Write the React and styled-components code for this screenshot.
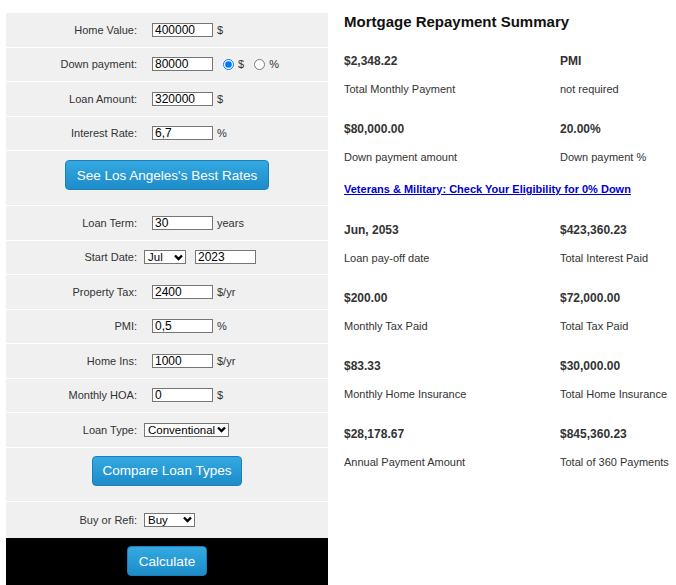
import React from "react";
import styled, { createGlobalStyle } from "styled-components";

const GlobalStyle = createGlobalStyle`
  body {
    margin: 0;
    background: #fff;
    font-family: Arial, "Liberation Sans", Helvetica, sans-serif;
  }
`;

const Chevron = () => (
  <ChevronSvg width="9" height="7" viewBox="0 0 9 7">
    <path d="M1 1.5 L4.5 5 L8 1.5" fill="none" stroke="#000" strokeWidth="2.4" />
  </ChevronSvg>
);

const fields = [
  { label: "Home Value:", value: "400000", unit: "$" },
  { label: "Down payment:", value: "80000", radio: true },
  { label: "Loan Amount:", value: "320000", unit: "$" },
  { label: "Interest Rate:", value: "6,7", unit: "%" },
];

const fields2 = [
  { label: "Property Tax:", value: "2400", unit: "$/yr" },
  { label: "PMI:", value: "0,5", unit: "%" },
  { label: "Home Ins:", value: "1000", unit: "$/yr" },
  { label: "Monthly HOA:", value: "0", unit: "$" },
];

const summary = [
  ["$2,348.22", "Total Monthly Payment", "PMI", "not required"],
  ["$80,000.00", "Down payment amount", "20.00%", "Down payment %"],
];

const summary2 = [
  ["Jun, 2053", "Loan pay-off date", "$423,360.23", "Total Interest Paid"],
  ["$200.00", "Monthly Tax Paid", "$72,000.00", "Total Tax Paid"],
  ["$83.33", "Monthly Home Insurance", "$30,000.00", "Total Home Insurance"],
  ["$28,178.67", "Annual Payment Amount", "$845,360.23", "Total of 360 Payments"],
];

function FieldRow({ f }) {
  return (
    <Row>
      <Label>{f.label}</Label>
      <Cell>
        <Input defaultValue={f.value} />
        {f.radio ? (
          <>
            <Radio type="radio" name="dp" defaultChecked />
            <Unit>$</Unit>
            <Radio type="radio" name="dp" />
            <Unit>%</Unit>
          </>
        ) : (
          <Unit>{f.unit}</Unit>
        )}
      </Cell>
    </Row>
  );
}

function Select({ value, width }) {
  return (
    <SelectBox $w={width}>
      <span>{value}</span>
      <Chevron />
    </SelectBox>
  );
}

function SummaryGrid({ rows }) {
  return (
    <Grid>
      {rows.map((r) => (
        <React.Fragment key={r[1]}>
          <Item>
            <Value>{r[0]}</Value>
            <Caption>{r[1]}</Caption>
          </Item>
          <Item>
            <Value>{r[2]}</Value>
            <Caption>{r[3]}</Caption>
          </Item>
        </React.Fragment>
      ))}
    </Grid>
  );
}

export default function App() {
  return (
    <Page>
      <GlobalStyle />
      <Form>
        {fields.map((f) => (
          <FieldRow key={f.label} f={f} />
        ))}
        <ButtonRow $h={55} $top={9}>
          <BlueButton $px={11}>See Los Angeles's Best Rates</BlueButton>
        </ButtonRow>
        <FieldRow f={{ label: "Loan Term:", value: "30", unit: "years" }} />
        <Row>
          <Label>Start Date:</Label>
          <Cell $flush>
            <Select value="Jul" width={42} />
            <Input defaultValue="2023" />
          </Cell>
        </Row>
        {fields2.map((f) => (
          <FieldRow key={f.label} f={f} />
        ))}
        <Row>
          <Label>Loan Type:</Label>
          <Cell $flush>
            <Select value="Conventional" width={85} />
          </Cell>
        </Row>
        <ButtonRow $h={54} $top={8}>
          <BlueButton $px={10}>Compare Loan Types</BlueButton>
        </ButtonRow>
        <Row $h={36.5} $last>
          <Label>Buy or Refi:</Label>
          <Cell $flush>
            <Select value="Buy" width={51} />
          </Cell>
        </Row>
        <CalcBar>
          <BlueButton $px={11}>Calculate</BlueButton>
        </CalcBar>
      </Form>
      <Summary>
        <Heading>Mortgage Repayment Summary</Heading>
        <SummaryGrid rows={summary} />
        <Link href="#">Veterans &amp; Military: Check Your Eligibility for 0% Down</Link>
        <SummaryGrid rows={summary2} />
      </Summary>
    </Page>
  );
}

const Page = styled.div`
  display: flex;
  align-items: flex-start;
  padding: 13px 0 0 6px;
`;

const Form = styled.div`
  width: 322px;
  flex-shrink: 0;
  background: #f0f0f0;
`;

const Row = styled.div`
  display: grid;
  grid-template-columns: 138px 1fr;
  align-items: center;
  box-sizing: border-box;
  height: ${({ $h }) => $h || 34.5}px;
  border-bottom: ${({ $last }) => ($last ? "none" : "1px solid #fff")};
`;

const Label = styled.div`
  text-align: right;
  padding-right: 7px;
  font-size: 11px;
  color: #333;
`;

const Cell = styled.div`
  display: flex;
  align-items: center;
  gap: 4px;
  padding-left: ${({ $flush }) => ($flush ? "0" : "8px")};
  & > div + input {
    margin-left: 5px;
  }
`;

const Input = styled.input`
  box-sizing: border-box;
  width: 61px;
  height: 14px;
  padding: 0 2px;
  border: 1px solid #767676;
  border-radius: 0;
  background: #fff;
  font: 12px Arial, "Liberation Sans", sans-serif;
  color: #000;
  outline: none;
`;

const Radio = styled.input`
  width: 11px;
  height: 11px;
  margin: 0 0 0 6px;
  accent-color: #0075ff;
`;

const Unit = styled.span`
  font-size: 11px;
  color: #333;
`;

const SelectBox = styled.div`
  box-sizing: border-box;
  width: ${({ $w }) => $w}px;
  height: 14px;
  display: flex;
  align-items: center;
  justify-content: space-between;
  gap: 2px;
  padding: 0 2px 0 3px;
  border: 1px solid #767676;
  background: #fff;
  font-size: 11.5px;
  color: #000;
  white-space: nowrap;
  overflow: hidden;
`;

const ChevronSvg = styled.svg`
  flex-shrink: 0;
`;

const ButtonRow = styled.div`
  display: flex;
  align-items: flex-start;
  justify-content: center;
  box-sizing: border-box;
  padding-top: ${({ $top }) => $top}px;
  height: ${({ $h }) => $h}px;
  border-bottom: 1px solid #fff;
`;

const BlueButton = styled.button`
  height: 30px;
  padding: 0 ${({ $px }) => $px}px;
  border: 1px solid #1b80b6;
  border-radius: 4px;
  background: linear-gradient(#34a9e2, #1d8cc8);
  color: #fff;
  font: 13.5px Arial, "Liberation Sans", sans-serif;
  cursor: pointer;
`;

const CalcBar = styled.div`
  display: flex;
  justify-content: center;
  background: #000;
  padding: 8px 0 12px;
`;

const Summary = styled.div`
  flex: 1;
  margin-left: 16px;
  color: #333;
`;

const Heading = styled.div`
  font-size: 15px;
  font-weight: bold;
  line-height: 18px;
  color: #111;
  margin-bottom: 16px;
`;

const Grid = styled.div`
  display: grid;
  grid-template-columns: 216px 1fr;
`;

const Item = styled.div`
  height: 68px;
  padding-top: 7px;
  box-sizing: border-box;
`;

const Value = styled.div`
  font-size: 12px;
  font-weight: bold;
  line-height: 14px;
`;

const Caption = styled.div`
  font-size: 11px;
  line-height: 14px;
  margin-top: 14px;
`;

const Link = styled.a`
  display: block;
  font-size: 11px;
  font-weight: bold;
  line-height: 12px;
  color: #0000cc;
  text-decoration: underline;
  height: 33px;
`;
